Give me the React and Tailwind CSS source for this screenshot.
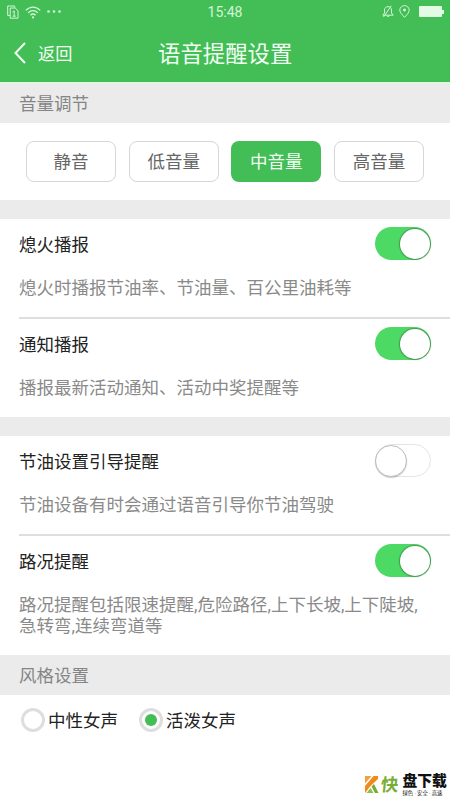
import React, { useState } from "react";

const volumes = ["静音", "低音量", "中音量", "高音量"];
const voices = ["中性女声", "活泼女声"];

const StatusBar = () => (
  <div className="h-6 relative flex items-center justify-between pl-[7px] pr-[6px] text-[#d3f7d5]">
    <div className="flex items-center">
      <svg width="12" height="14" viewBox="0 0 12 14" fill="none" stroke="currentColor" strokeWidth="1">
        <path d="M3 10.5H.7V1h7v1.5" />
        <path d="M3.2 3h5l2.8 2.8v7.4H3.2z" />
        <path d="M5.5 7.2l1.7-1.3v5.3M5.6 11.2h3.2" />
      </svg>
      <svg className="ml-[6px]" width="16" height="13" viewBox="0 0 16 13" fill="none" stroke="currentColor" strokeWidth="1.3">
        <path d="M.8 4.4C5-.1 11-.1 15.2 4.4" />
        <path d="M3.1 6.9c2.9-3 6.9-3 9.8 0" />
        <path d="M5.4 9.2c1.6-1.5 3.6-1.5 5.2 0" />
        <circle cx="8" cy="11.4" r="1.1" fill="currentColor" stroke="none" />
      </svg>
      <svg className="ml-[6px] -mt-[2px]" width="14" height="3" viewBox="0 0 14 3" fill="currentColor">
        <circle cx="1.5" cy="1.5" r="1.3" />
        <circle cx="7" cy="1.5" r="1.3" />
        <circle cx="12.5" cy="1.5" r="1.3" />
      </svg>
    </div>
    <span className="absolute left-0 right-0 top-[2px] text-center text-[14px] leading-[20px]">15:48</span>
    <div className="flex items-center -mt-px">
      <svg width="12" height="13" viewBox="0 0 12 13" fill="none" stroke="currentColor" strokeWidth="1">
        <path d="M.8 10.2h10.4L9.5 8V5C9.5 3 8 1.6 6 1.6S2.5 3 2.5 5v3z" />
        <path d="M4.8 10.5c.3 1.5 2.1 1.5 2.4 0M9.3.8L1.5 12" />
      </svg>
      <svg className="ml-[5px]" width="11" height="13" viewBox="0 0 11 13" fill="none" stroke="currentColor" strokeWidth="1">
        <path d="M5.5 12.3C3 9.5.8 7.5.8 5.1a4.7 4.5 0 0 1 9.4 0c0 2.4-2.2 4.4-4.7 7.2z" />
        <circle cx="5.5" cy="5" r="1.1" fill="currentColor" />
      </svg>
      <div className="ml-[9px] w-[23px] h-[11px] rounded-[1px] bg-[#e3fbe4]" />
      <div className="w-[2px] h-1 bg-[#e3fbe4]" />
    </div>
  </div>
);

const Toggle = ({ on, onClick }) => (
  <button
    onClick={onClick}
    className={
      on
        ? "w-14 h-[33px] -mt-[3px] p-px rounded-full bg-[#4cd964] flex items-center justify-end"
        : "w-14 h-[33px] -mt-[3px] rounded-full bg-white border border-[#e4e4e4] flex items-center"
    }
  >
    <span
      className={
        on
          ? "w-[30px] h-[30px] rounded-full bg-white shadow-[0_0_1px_1px_rgba(60,110,65,0.6)]"
          : "-ml-px w-8 h-8 rounded-full bg-white border border-[#bdbdbd] shadow-[0_1px_1px_rgba(0,0,0,0.2)]"
      }
    />
  </button>
);

const Row = ({ title, children, initial = true, last = false }) => {
  const [on, setOn] = useState(initial);

  return (
    <div className={last ? "ml-[19px]" : "ml-[19px] h-[100px] border-b-2 border-[#dedede]"}>
      <div className="h-[52px] flex items-center justify-between pr-[19.5px]">
        <span className="text-[#222]">{title}</span>
        <Toggle on={on} onClick={() => setOn(!on)} />
      </div>
      <p className="pt-[7px] leading-[20.5px] whitespace-nowrap text-[#8a8a8a]">{children}</p>
    </div>
  );
};

const Logo = () => (
  <div className="absolute left-[365px] top-[775px] flex items-start">
    <svg width="14" height="19" viewBox="0 0 14 19">
      <path d="M0 1h6.5L0 8.5z" fill="#f0a040" />
      <path d="M8.5 1H13v3L5.5 11 0 18v-7z" fill="#f08a1d" />
      <path d="M6.5 11.5L9 9l4.5 9H10z" fill="#76ad35" />
      <path d="M1.5 18l4-5 3 5z" fill="#8fbe4a" />
    </svg>
    <span className="ml-[2px] text-[17.5px] leading-[20px] font-bold text-[#79ad36] -skew-x-6">快</span>
    <div className="ml-1 -mt-[2px] text-[#111]">
      <div className="text-[14.8px] leading-[16px] font-black whitespace-nowrap">盘下载</div>
      <div className="mt-px text-[5.3px] leading-[6px] whitespace-nowrap">绿色 · 安全 · 高速</div>
    </div>
  </div>
);

const App = () => {
  const [volume, setVolume] = useState(2);
  const [voice, setVoice] = useState(1);

  return (
    <div className="relative w-[450px] h-[800px] overflow-hidden bg-white font-[Roboto,'Noto_Sans_CJK_SC',sans-serif] text-[17.5px] leading-[22px]">
      <header className="h-[82px] bg-[#43bd56] text-[#f1fff2]">
        <StatusBar />
        <div className="relative h-[58px] flex items-center">
          <button className="flex items-center pl-[14px]">
            <svg width="12" height="22" viewBox="0 0 12 22" fill="none" stroke="currentColor" strokeWidth="2">
              <path d="M11 1L1.5 11 11 21" />
            </svg>
            <span className="ml-3 mt-px text-[17.2px]">返回</span>
          </button>
          <h1 className="absolute left-[158px] top-[15px] text-[22.4px] leading-[30px]">语音提醒设置</h1>
        </div>
      </header>

      <div className="h-[41px] border-t-2 border-[#e3f3e4] bg-[#ebebeb] pl-[19px] flex items-center text-[#858585]">音量调节</div>
      <div className="h-[77px] px-[26px] flex items-center justify-between">
        {volumes.map((label, i) => (
          <button
            key={label}
            onClick={() => setVolume(i)}
            className={
              i === volume
                ? "w-[90px] h-[41px] rounded-lg bg-[#43bd56] text-[#f1fff2]"
                : "w-[90px] h-[41px] rounded-lg border border-[#d6d6d6] text-[#666]"
            }
          >
            {label}
          </button>
        ))}
      </div>

      <div className="h-[19px] bg-[#ebebeb]" />
      <section className="h-[198px]">
        <Row title="熄火播报">熄火时播报节油率、节油量、百公里油耗等</Row>
        <Row title="通知播报" last>播报最新活动通知、活动中奖提醒等</Row>
      </section>

      <div className="h-[19px] bg-[#ebebeb]" />
      <section className="h-[219px]">
        <Row title="节油设置引导提醒" initial={false}>节油设备有时会通过语音引导你节油驾驶</Row>
        <Row title="路况提醒" last>
          路况提醒包括限速提醒,危险路径,上下长坡,上下陡坡,
          <br />
          急转弯,连续弯道等
        </Row>
      </section>

      <div className="h-10 bg-[#ebebeb] pl-[19px] pt-[2px] flex items-center text-[#858585]">风格设置</div>
      <div className="h-[50px] pl-[21px] flex items-center gap-[21px] text-[#222]">
        {voices.map((label, i) => (
          <button key={label} onClick={() => setVoice(i)} className="flex items-center">
            <span className="w-6 h-6 mr-[3px] rounded-full border-[3px] border-[#dedede] flex items-center justify-center">
              {i === voice && <span className="w-3 h-3 rounded-full bg-[#43bd56]" />}
            </span>
            <span className="mt-[2px]">{label}</span>
          </button>
        ))}
      </div>

      <Logo />
    </div>
  );
};

export default App;
